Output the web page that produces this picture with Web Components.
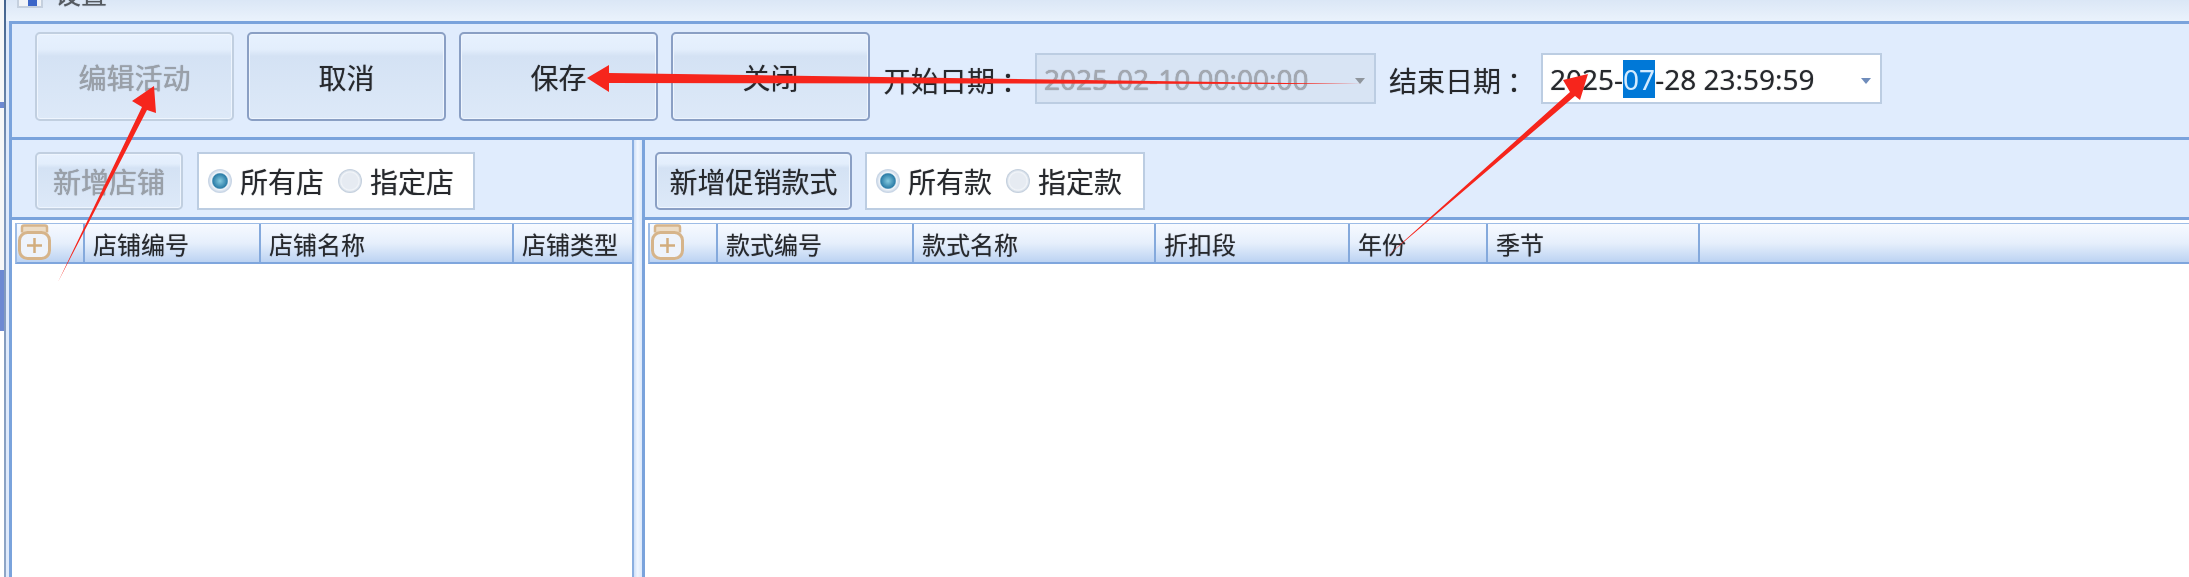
<!DOCTYPE html>
<html lang="zh-CN">
  <head>
    <meta charset="UTF-8" />
    <title>设置</title>
    <style>
      html,
      body {
        margin: 0;
        height: 100%;
        overflow: hidden;
        background: #fff;
      }

      body {
        font-family: "Noto Sans CJK SC", "Noto Sans", sans-serif;
        color: #26282c;
      }
    </style>
  </head>
  <body>
    <promo-window>
      <span slot="title">设置</span>

      <action-button slot="tools" disabled>编辑活动</action-button>
      <action-button slot="tools">取消</action-button>
      <action-button slot="tools">保存</action-button>
      <action-button slot="tools">关闭</action-button>
      <date-field slot="tools" label="开始日期" disabled>2025-02-10 00:00:00</date-field>
      <date-field slot="tools" label="结束日期">2025-<mark-part>07</mark-part>-28 23:59:59</date-field>

      <list-pane slot="left" fixed style="--head-pad: 23px; --head-gap: 14px">
        <action-button slot="head" small disabled style="--btn-width: 148px">新增店铺</action-button>
        <radio-box slot="head" first="所有店" second="指定店" style="--box-width: 278px"></radio-box>
        <grid-header slot="grid">
          <grid-col width="68" pad="0"><jar-icon></jar-icon></grid-col>
          <grid-col width="176">店铺编号</grid-col>
          <grid-col width="253">店铺名称</grid-col>
          <grid-col width="120" last>店铺类型</grid-col>
        </grid-header>
      </list-pane>

      <list-pane slot="right" style="--head-pad: 10px; --head-gap: 13px">
        <action-button slot="head" small style="--btn-width: 197px">新增促销款式</action-button>
        <radio-box slot="head" first="所有款" second="指定款" style="--box-width: 280px"></radio-box>
        <grid-header slot="grid">
          <grid-col width="68" pad="0"><jar-icon></jar-icon></grid-col>
          <grid-col width="196">款式编号</grid-col>
          <grid-col width="242">款式名称</grid-col>
          <grid-col width="194">折扣段</grid-col>
          <grid-col width="138">年份</grid-col>
          <grid-col width="212">季节</grid-col>
        </grid-header>
      </list-pane>
    </promo-window>

    <arrow-layer></arrow-layer>

    <template id="window-template">
      <style>
        :host {
          display: flex;
          width: 100%;
          height: 577px;
          overflow: hidden;
          filter: blur(0.6px);
          text-shadow: 0 0 1px rgba(20, 24, 32, 0.45);
        }

        .desk {
          width: 4px;
          display: flex;
          flex-direction: column;
          flex: none;
          background: #f6f7f8;
        }

        .desk i {
          display: block;
          background: #6d89d2;
        }

        .frame {
          flex: none;
          width: 2px;
          background: linear-gradient(#44648e, #7d96bb 30%, #8ea5c6);
        }

        .gutter {
          flex: none;
          width: 3px;
          background: #dfeafb;
        }

        .main {
          flex: 1;
          min-width: 0;
          display: flex;
          flex-direction: column;
        }

        .title {
          flex: none;
          height: 21px;
          margin-left: -3px;
          padding-left: 11px;
          display: flex;
          overflow: hidden;
          background: linear-gradient(#dbe7f6, #eaf2fc);
        }

        .icon {
          flex: none;
          width: 26px;
          height: 8px;
          box-sizing: border-box;
          border: 2px solid #c5d0de;
          border-top: 0;
          background: linear-gradient(90deg, #f1f4f8 40%, #3c66c8 40%, #3c66c8 80%, #f1f4f8 80%);
        }

        .caption {
          margin: -24px 0 0 12px;
          font-size: 26px;
          line-height: 34px;
          color: #555a60;
        }

        .tools {
          flex: none;
          height: 119px;
          display: flex;
          align-items: flex-start;
          gap: 13px;
          box-sizing: border-box;
          padding: 8px 0 0 23px;
          background: #e0ecfd;
          border-top: 3px solid #7aa3dc;
          border-left: 3px solid #7aa3dc;
          border-bottom: 3px solid #7aa3dc;
        }

        .panes {
          flex: 1;
          min-height: 0;
          display: flex;
        }

        .split {
          flex: none;
          width: 8px;
          background: linear-gradient(90deg, #cfe0f8, #f0f6ff 45%, #dce9fb);
        }
      </style>
      <div class="desk">
        <div style="height: 102px"></div>
        <i style="height: 6px"></i>
        <div style="height: 162px"></div>
        <i style="height: 61px"></i>
        <div style="flex: 1; background: #fff"></div>
      </div>
      <div class="frame"></div>
      <div class="gutter"></div>
      <div class="main">
        <div class="title">
          <div class="icon"></div>
          <div class="caption"><slot name="title"></slot></div>
        </div>
        <div class="tools"><slot name="tools"></slot></div>
        <div class="panes">
          <slot name="left"></slot>
          <div class="split"></div>
          <slot name="right"></slot>
        </div>
      </div>
    </template>

    <template id="button-template">
      <style>
        :host {
          display: block;
          flex: none;
        }

        .btn {
          width: 199px;
          height: 89px;
          box-sizing: border-box;
          display: flex;
          align-items: center;
          justify-content: center;
          border: 2px solid #8a9fc4;
          border-radius: 5px;
          font-size: 28px;
          color: #26282c;
          background: linear-gradient(#e7f1fe 0, #e3eefc 18%, #d4e2f4 26%, #dde9f8 100%);
          box-shadow: inset 0 0 0 1px #eef5fe;
        }

        :host([small]) .btn {
          width: var(--btn-width);
          height: 58px;
        }

        :host([disabled]) .btn {
          border-color: #c1cfe0;
          color: #9aa0a8;
        }
      </style>
      <div class="btn"><slot></slot></div>
    </template>

    <template id="date-template">
      <style>
        :host {
          display: flex;
          flex: none;
          align-items: center;
          margin-top: 21px;
          font-size: 28px;
        }

        .label {
          width: 152px;
          margin-top: 3px;
          white-space: nowrap;
        }

        .colon {
          margin-left: 6px;
          font-family: "Noto Sans CJK TC", sans-serif;
        }

        .box {
          width: 341px;
          height: 51px;
          box-sizing: border-box;
          display: flex;
          align-items: center;
          padding-left: 7px;
          border: 2px solid #bccde2;
          background: #fff;
          font-family: "Noto Sans", sans-serif;
          white-space: nowrap;
          position: relative;
        }

        .caret {
          position: absolute;
          right: 9px;
          top: 23px;
          border-style: solid;
          border-width: 6px 5px 0;
          border-color: #6f8cbb transparent transparent;
        }

        :host([disabled]) .box {
          background: #d8e4f4;
          color: #a3a8b0;
        }

        :host([disabled]) .caret {
          border-top-color: #8f959c;
        }
      </style>
      <div class="label"><span class="name"></span><span class="colon">：</span></div>
      <div class="box"><slot></slot><span class="caret"></span></div>
    </template>

    <template id="mark-template">
      <style>
        :host {
          display: inline-block;
          height: 38px;
          line-height: 38px;
          background: #0078d7;
          color: #d3ebff;
          text-shadow: none;
        }
      </style>
      <slot></slot>
    </template>

    <template id="pane-template">
      <style>
        :host {
          display: flex;
          flex-direction: column;
          box-sizing: border-box;
          min-width: 0;
          background: #fff;
          flex: 1;
          border-left: 3px solid #7aa3dc;
        }

        :host([fixed]) {
          flex: none;
          width: 625px;
          border-right: 2px solid #8aaee0;
        }

        .head {
          flex: none;
          height: 80px;
          box-sizing: border-box;
          padding: 12px 0 0 var(--head-pad);
          display: flex;
          align-items: flex-start;
          gap: var(--head-gap);
          background: #e0ecfd;
          border-bottom: 3px solid #7aa3dc;
        }

        .grid {
          flex: none;
          padding: 3px 0 0 3px;
        }
      </style>
      <div class="head"><slot name="head"></slot></div>
      <div class="grid"><slot name="grid"></slot></div>
    </template>

    <template id="radio-template">
      <style>
        :host {
          display: block;
          flex: none;
          font-size: 28px;
        }

        .box {
          width: var(--box-width);
          height: 58px;
          box-sizing: border-box;
          display: flex;
          align-items: center;
          padding-left: 9px;
          gap: 14px;
          border: 2px solid #bccde2;
          background: #fff;
        }

        .item {
          display: flex;
          align-items: center;
          gap: 8px;
        }

        .dot {
          width: 24px;
          height: 24px;
          box-sizing: border-box;
          border-radius: 50%;
          background: radial-gradient(circle, #e6ebf2 0 46%, #f2f5f9 54%, #c3cfdd 68%, #b4c2d3 100%);
        }

        .on {
          background: radial-gradient(circle, #86cbe0 0, #2d7ea8 42%, #f0f5fa 50%, #c9d6e6 66%, #bccbdd 100%);
        }
      </style>
      <div class="box">
        <div class="item"><span class="dot on"></span><span class="first"></span></div>
        <div class="item"><span class="dot"></span><span class="second"></span></div>
      </div>
    </template>

    <template id="header-template">
      <style>
        :host {
          display: flex;
          height: 41px;
          box-sizing: border-box;
          background: linear-gradient(#f7faff 0, #e6effc 50%, #bcd3f2 100%);
          border-top: 1px solid #9dbce6;
          border-bottom: 2px solid #7fa6dd;
          border-left: 2px solid #9dbce6;
          font-size: 24px;
        }
      </style>
      <slot></slot>
    </template>

    <template id="col-template">
      <style>
        :host {
          display: flex;
          align-items: center;
          flex: none;
          box-sizing: border-box;
          padding-left: 8px;
          border-right: 2px solid #84a9dc;
          white-space: nowrap;
        }

        :host([last]) {
          border-right: 0;
        }

        :host([pad="0"]) {
          padding-left: 1px;
        }
      </style>
      <slot></slot>
    </template>

    <template id="jar-template">
      <style>
        :host {
          display: block;
          width: 33px;
          height: 36px;
          margin-top: -3px;
        }
      </style>
      <svg width="33" height="36" viewBox="0 0 33 36" fill="none" stroke="#d6b48a">
        <path d="M4 8.5V3.5Q4 1.5 6 1.5H27Q29 1.5 29 3.5V8.5" stroke-width="2.5" fill="#ecdcc6" />
        <rect x="1.5" y="8.5" width="30" height="26" rx="8" stroke-width="3" fill="#eef3fb" />
        <path d="M16.5 14V29M9 21.5H24" stroke-width="2.5" stroke="#d2ad7e" />
      </svg>
    </template>

    <template id="arrow-template">
      <style>
        :host {
          position: absolute;
          left: 0;
          top: 0;
          width: 2189px;
          height: 577px;
          pointer-events: none;
        }
      </style>
      <svg width="2189" height="577" viewBox="0 0 2189 577" fill="#f6251c">
        <polygon points="58,282 142,107 132,101 154,86 156,113 147,110" />
        <polygon points="1362,84 609,73 609,65 587,78 609,92 609,83" />
        <polygon points="1385,258 1570,92 1563,80 1588,74 1580,100 1575,96" />
      </svg>
    </template>

    <script>
      function shadowFrom(el, id) {
        const root = el.attachShadow({ mode: "open" });
        root.appendChild(document.getElementById(id).content.cloneNode(true));
        return root;
      }

      class PlainElement extends HTMLElement {
        constructor() {
          super();
          shadowFrom(this, this.constructor.templateId);
        }
      }

      class PromoWindow extends PlainElement {
        static templateId = "window-template";
      }

      class ActionButton extends PlainElement {
        static templateId = "button-template";
      }

      class MarkPart extends PlainElement {
        static templateId = "mark-template";
      }

      class ListPane extends PlainElement {
        static templateId = "pane-template";
      }

      class GridHeader extends PlainElement {
        static templateId = "header-template";
      }

      class JarIcon extends PlainElement {
        static templateId = "jar-template";
      }

      class ArrowLayer extends PlainElement {
        static templateId = "arrow-template";
      }

      class DateField extends PlainElement {
        static templateId = "date-template";

        connectedCallback() {
          this.shadowRoot.querySelector(".name").textContent =
            this.getAttribute("label");
        }
      }

      class RadioBox extends PlainElement {
        static templateId = "radio-template";

        connectedCallback() {
          this.shadowRoot.querySelector(".first").textContent =
            this.getAttribute("first");
          this.shadowRoot.querySelector(".second").textContent =
            this.getAttribute("second");
        }
      }

      class GridCol extends PlainElement {
        static templateId = "col-template";

        connectedCallback() {
          this.style.width = this.getAttribute("width") + "px";
        }
      }

      customElements.define("promo-window", PromoWindow);
      customElements.define("action-button", ActionButton);
      customElements.define("mark-part", MarkPart);
      customElements.define("list-pane", ListPane);
      customElements.define("grid-header", GridHeader);
      customElements.define("jar-icon", JarIcon);
      customElements.define("arrow-layer", ArrowLayer);
      customElements.define("date-field", DateField);
      customElements.define("radio-box", RadioBox);
      customElements.define("grid-col", GridCol);
    </script>
  </body>
</html>
